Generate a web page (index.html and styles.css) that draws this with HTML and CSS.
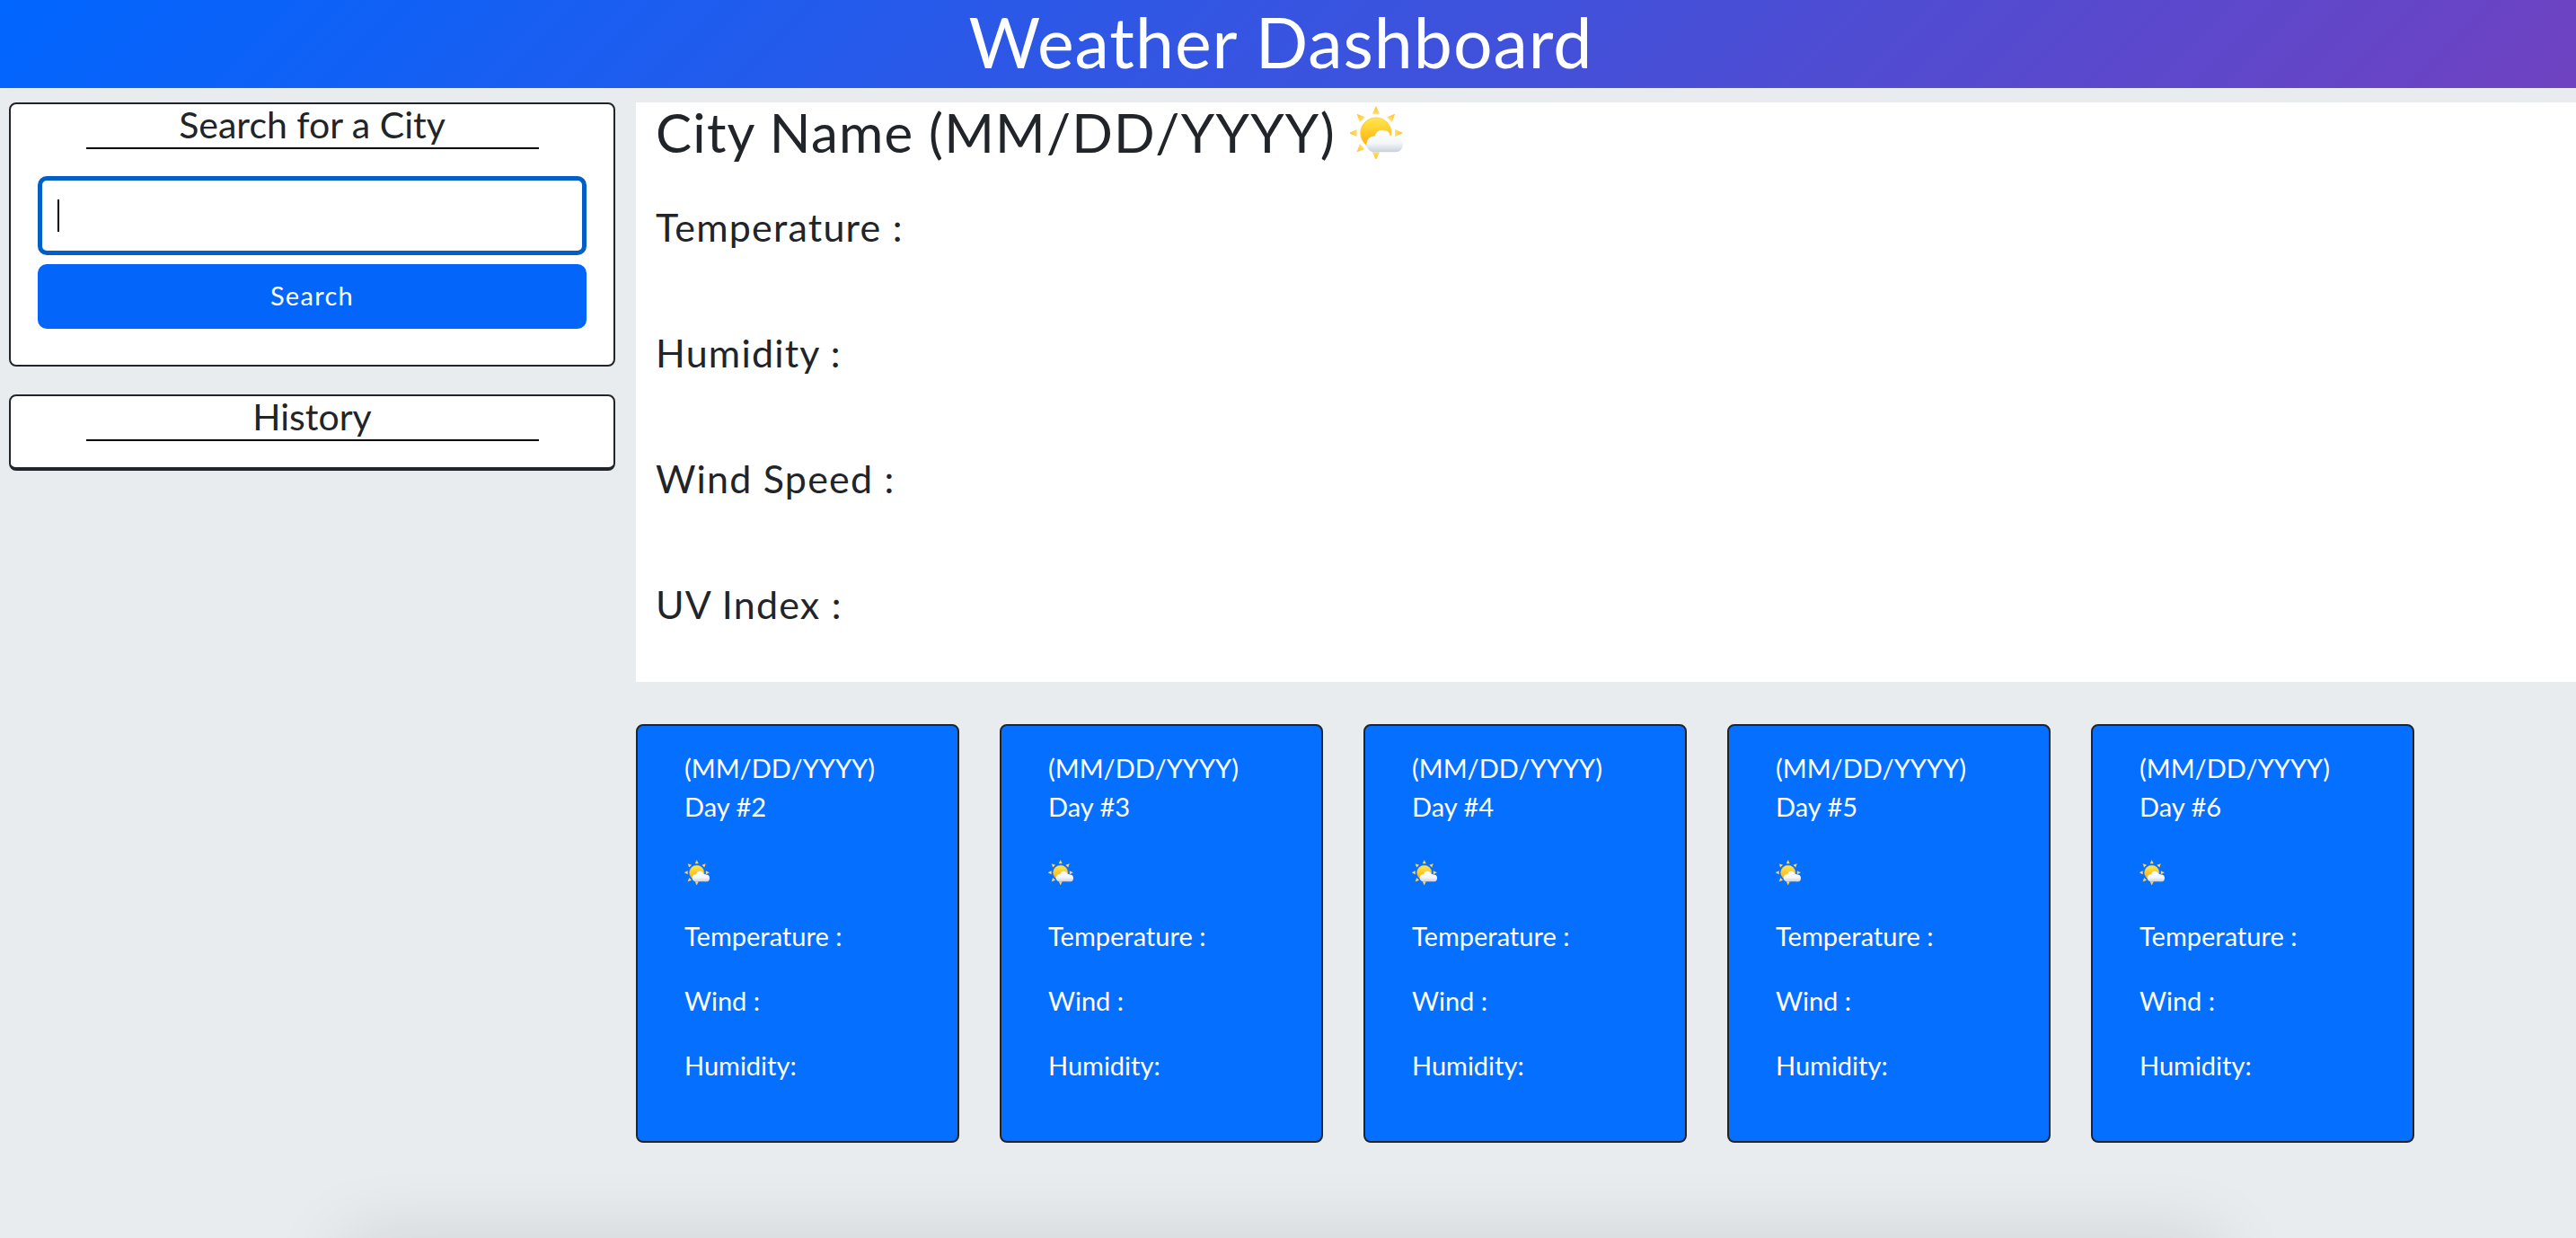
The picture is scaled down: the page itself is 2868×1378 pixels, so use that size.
FILE: index.html
```html
<!DOCTYPE html>
<html lang="en">
<head>
  <meta charset="UTF-8" />
  <title>Weather Dashboard</title>
  <link rel="stylesheet" href="styles.css">
</head>
<body>

<svg class="icon-defs" aria-hidden="true">
  <defs>
    <linearGradient id="sun-fill" x1="0" y1="0" x2="0" y2="1">
      <stop offset="0" stop-color="#ffe84f" />
      <stop offset="1" stop-color="#ffa900" />
    </linearGradient>
    <linearGradient id="ray-fill" x1="0" y1="0" x2="0" y2="1">
      <stop offset="0" stop-color="#ffc21a" />
      <stop offset="1" stop-color="#ffdc73" />
    </linearGradient>
    <linearGradient id="cloud-fill" x1="0" y1="0" x2="0" y2="1">
      <stop offset="0" stop-color="#ffffff" />
      <stop offset="0.6" stop-color="#f4f6f9" />
      <stop offset="1" stop-color="#c9d0da" />
    </linearGradient>
  </defs>
  <symbol id="sun-cloud" viewBox="0 0 100 100">
    <g fill="url(#ray-fill)">
      <polygon points="49,0 42,15 56,15" />
      <polygon points="49,0 42,15 56,15" transform="rotate(45 49 51)" />
      <polygon points="49,0 42,15 56,15" transform="rotate(90 49 51)" />
      <polygon points="49,0 42,15 56,15" transform="rotate(135 49 51)" />
      <polygon points="49,0 42,15 56,15" transform="rotate(180 49 51)" />
      <polygon points="49,0 42,15 56,15" transform="rotate(225 49 51)" />
      <polygon points="49,0 42,15 56,15" transform="rotate(270 49 51)" />
      <polygon points="49,0 42,15 56,15" transform="rotate(315 49 51)" />
    </g>
    <circle cx="49" cy="51" r="29" fill="url(#sun-fill)" stroke="#ffc54d" stroke-width="1.5" />
    <path fill="url(#cloud-fill)" d="M45 87A15 15 0 0 1 47 57A15 15 0 0 1 76 56A14 14 0 0 1 86 59A14 14 0 0 1 86 87Z" />
  </symbol>
</svg>

<header class="page-header">
  <h1>Weather Dashboard</h1>
</header>

<div class="layout">
  <aside class="sidebar">
    <section class="box">
      <h2 class="box-title">Search for a City</h2>
      <form class="search-form">
        <div class="input-wrap">
          <input type="text" class="city-input" aria-label="City" />
          <span class="caret"></span>
        </div>
        <button type="button" class="search-btn">Search</button>
      </form>
    </section>
    <section class="box box-history">
      <h2 class="box-title">History</h2>
    </section>
  </aside>

  <main class="content">
    <section class="today">
      <h2 class="today-title">City Name (MM/DD/YYYY) <svg class="today-icon"><use href="#sun-cloud" /></svg></h2>
      <p class="stat">Temperature :</p>
      <p class="stat">Humidity :</p>
      <p class="stat">Wind Speed :</p>
      <p class="stat">UV Index :</p>
    </section>

    <section class="forecast">
      <article class="day-card">
        <p class="day-head">(MM/DD/YYYY)<br>Day #2</p>
        <p class="day-sky"><svg class="day-icon"><use href="#sun-cloud" /></svg></p>
        <p>Temperature :</p>
        <p>Wind :</p>
        <p>Humidity:</p>
      </article>
      <article class="day-card">
        <p class="day-head">(MM/DD/YYYY)<br>Day #3</p>
        <p class="day-sky"><svg class="day-icon"><use href="#sun-cloud" /></svg></p>
        <p>Temperature :</p>
        <p>Wind :</p>
        <p>Humidity:</p>
      </article>
      <article class="day-card">
        <p class="day-head">(MM/DD/YYYY)<br>Day #4</p>
        <p class="day-sky"><svg class="day-icon"><use href="#sun-cloud" /></svg></p>
        <p>Temperature :</p>
        <p>Wind :</p>
        <p>Humidity:</p>
      </article>
      <article class="day-card">
        <p class="day-head">(MM/DD/YYYY)<br>Day #5</p>
        <p class="day-sky"><svg class="day-icon"><use href="#sun-cloud" /></svg></p>
        <p>Temperature :</p>
        <p>Wind :</p>
        <p>Humidity:</p>
      </article>
      <article class="day-card">
        <p class="day-head">(MM/DD/YYYY)<br>Day #6</p>
        <p class="day-sky"><svg class="day-icon"><use href="#sun-cloud" /></svg></p>
        <p>Temperature :</p>
        <p>Wind :</p>
        <p>Humidity:</p>
      </article>
    </section>
  </main>
</div>

<div class="page-end">
  <div class="page-end-shadow"></div>
</div>

</body>
</html>
```

FILE: styles.css
```css
* {
  box-sizing: border-box;
}
html, body {
  height: 100%;
  overflow: hidden;
}
body {
  margin: 0;
  background: #e9ecef;
  color: #212529;
  font-family: Lato, "Open Sans", sans-serif;
  font-size: 29px;
  line-height: 43px;
}
p, h1, h2 {
  margin: 0;
  font-weight: 400;
}
.icon-defs {
  position: absolute;
  width: 0;
  height: 0;
}

.page-header {
  height: 98px;
  background: linear-gradient(135deg, #0066ff, #6f42c1);
  color: #fff;
  text-align: center;
}
.page-header h1 {
  font-size: 77px;
  line-height: 92px;
  letter-spacing: 1px;
  padding-right: 16px;
}

.layout {
  display: grid;
  grid-template-columns: 708px 1fr;
  padding-top: 16px;
}
.sidebar {
  padding: 0 23px 0 10px;
}
.box {
  height: 294px;
  background: #fff;
  border: 2px solid #212529;
  border-radius: 8px;
  margin-bottom: 31px;
}
.box-history {
  height: 85px;
  border-bottom-width: 4px;
}
.box-title {
  width: 504px;
  height: 50px;
  margin: 0 auto;
  border-bottom: 2px solid #000;
  font-size: 41px;
  line-height: 46px;
  text-align: center;
}
.search-form {
  padding: 30px 30px 0;
}
.input-wrap {
  position: relative;
}
.city-input {
  display: block;
  width: 100%;
  height: 88px;
  background: #fff;
  border: 5px solid #0060c8;
  border-radius: 10px;
  outline: none;
  caret-color: transparent;
}
.caret {
  position: absolute;
  left: 22px;
  top: 26px;
  width: 2px;
  height: 36px;
  background: #000;
}
.search-btn {
  display: block;
  width: 100%;
  height: 72px;
  margin-top: 10px;
  padding-bottom: 4px;
  background: #0465fb;
  border: none;
  border-radius: 10px;
  color: #fff;
  font: inherit;
  letter-spacing: 1.3px;
}

.today {
  height: 645px;
  background: #fff;
  padding: 0 22px;
}
.today-title {
  display: flex;
  align-items: center;
  gap: 16px;
  height: 66px;
  margin-bottom: 38px;
  font-size: 60px;
  line-height: 66px;
  letter-spacing: 1.2px;
}
.today-icon {
  width: 59px;
  height: 59px;
}
.stat {
  height: 140px;
  font-size: 43px;
  line-height: 70px;
  letter-spacing: 1.2px;
}

.forecast {
  display: flex;
  gap: 45px;
  margin-top: 47px;
}
.day-card {
  width: 360px;
  height: 466px;
  background: #056fff;
  border: 2px solid #212529;
  border-radius: 8px;
  padding: 25px 52px;
  color: #fff;
}
.day-card p {
  height: 72px;
}
.day-card .day-head {
  height: 113px;
}
.day-card .day-sky {
  height: 74px;
}
.day-icon {
  width: 28px;
  height: 28px;
  vertical-align: -6px;
}

.page-end {
  height: 106px;
  overflow: hidden;
}
.page-end-shadow {
  width: 2086px;
  height: 40px;
  margin: 118px 0 0 384px;
  box-shadow: 0 0 86px rgba(0, 0, 0, 0.2);
}
```
